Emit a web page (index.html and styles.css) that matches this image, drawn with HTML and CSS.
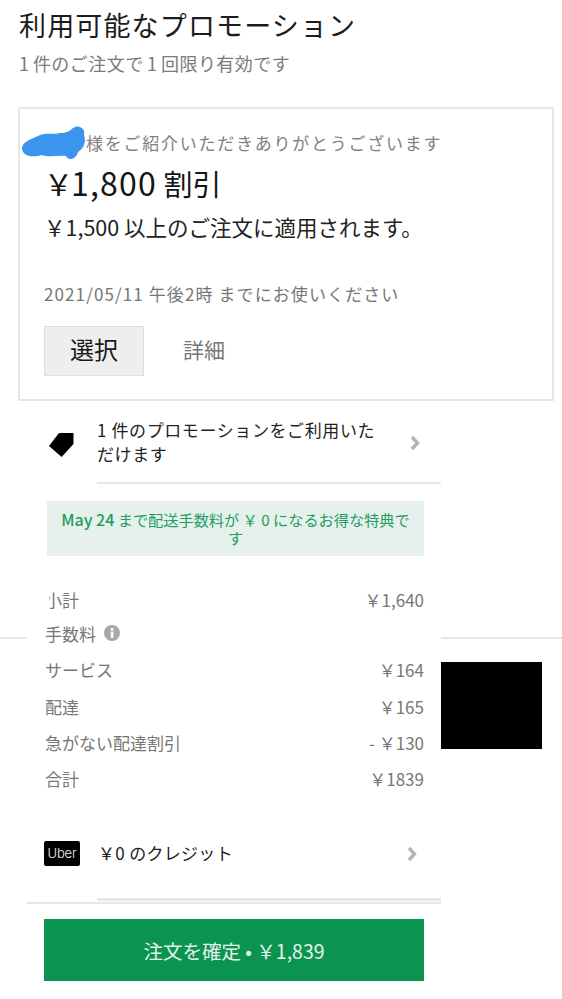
FILE: index.html
```html
<!DOCTYPE html>
<html lang="ja">
<head>
<meta charset="utf-8">
<title>利用可能なプロモーション</title>
<link rel="stylesheet" href="styles.css">
</head>
<body>
<div class="page">
  <h1 class="title">利用可能なプロモーション</h1>
  <p class="subtitle">1 件のご注文で 1 回限り有効です</p>

  <section class="card">
    <svg class="blob" viewBox="0 0 70 40" aria-hidden="true"><path d="M2 24C3 17 12 15 18 12 25 8 33 11 40 9 46 9 50 7 53 4 58 0 66 4 64 11 66 16 65 24 58 28 56 36 48 37 46 32 38 31 30 34 22 31 12 34 2 32 2 24Z" fill="#3b95ef"/></svg>
    <p class="greeting">様をご紹介いただきありがとうございます</p>
    <p class="amount">&#xFFE5;<span class="figure">1,800</span> 割引</p>
    <p class="minimum">&#xFFE5;1,500 以上のご注文に適用されます。</p>
    <p class="expiry">2021/05/11 午後2時 までにお使いください</p>
    <div class="actions">
      <button class="select">選択</button>
      <span class="details">詳細</span>
    </div>
  </section>

  <div class="rule"></div>
  <div class="blackout"></div>

  <section class="panel">
    <div class="promo">
      <svg class="tag" viewBox="0 0 25 24" aria-hidden="true"><path d="M0 13 10 0H24.500V11L12.600 24Z" fill="#000"/></svg>
      <p class="promo-text">1 件のプロモーションをご利用いただけます</p>
      <svg class="chev" viewBox="0 0 10 16" aria-hidden="true"><path d="M2 2 7.500 8 2 14" fill="none" stroke="#b4b4b4" stroke-width="3.400"/></svg>
    </div>
    <div class="divider"></div>
    <div class="notice"><b>May 24</b> まで配送手数料が &#xFFE5; 0 になるお得な特典です</div>

    <ul class="lines">
      <li class="line"><span class="clipped">小計</span><span>&#xFFE5;1,640</span></li>
      <li class="line line-fee"><span class="fee">手数料
        <svg class="info" viewBox="0 0 16 16" aria-hidden="true"><circle cx="8" cy="8" r="8" fill="#a8a8a8"/><rect x="6.800" y="3" width="2.600" height="2.600" fill="#fff"/><rect x="6.800" y="6.600" width="2.600" height="6.400" fill="#fff"/></svg></span></li>
      <li class="line"><span>サービス</span><span>&#xFFE5;164</span></li>
      <li class="line line-delivery"><span>配達</span><span>&#xFFE5;165</span></li>
      <li class="line"><span>急がない配達割引</span><span>- &#xFFE5;130</span></li>
      <li class="line"><span>合計</span><span>&#xFFE5;1839</span></li>
    </ul>

    <div class="credit">
      <span class="uber">Uber</span>
      <span class="credit-text">&#xFFE5;0 のクレジット</span>
      <svg class="chev" viewBox="0 0 10 16" aria-hidden="true"><path d="M2 2 7.500 8 2 14" fill="none" stroke="#b4b4b4" stroke-width="3.400"/></svg>
    </div>
    <div class="divider divider-thick"></div>
    <div class="divider-full"></div>
    <button class="confirm">注文を確定 • &#xFFE5;1,839</button>
  </section>
</div>
</body>
</html>
```

FILE: styles.css
```css
* { box-sizing: border-box; }
html, body { margin: 0; padding: 0; background: #fff; }
body { font-family: "Noto Sans CJK JP", "Noto Sans", sans-serif; }
p, h1, ul { margin: 0; padding: 0; }
ul { list-style: none; }
.page { position: relative; width: 562px; height: 999px; overflow: hidden; padding-top: 7px; }

.title { margin-left: 19px; font-size: 27px; line-height: 36px; font-weight: 400; letter-spacing: 1.150px; color: #1c1c1c; }
.subtitle { margin: 8px 0 0 19px; font-size: 18px; line-height: 24px; letter-spacing: .45px; word-spacing: -1px; color: #7b7b7b; }

.card { position: relative; width: 536px; height: 294px; margin: 32px 0 0 18px; padding: 22px 0 0 24px; border: 2px solid #e6e6e6; }
.blob { position: absolute; left: 0; top: 15px; width: 70px; height: 40px; }
.greeting { margin-left: 42px; font-size: 17px; line-height: 24px; letter-spacing: 1.750px; color: #808080; }
.amount { margin: 9px 0 0 0; font-size: 29px; line-height: 36px; color: #151515; }
.figure { margin-left: -2px; font-size: 32px; letter-spacing: 1.200px; }
.minimum { margin: 12px 0 0 0; font-size: 21.500px; line-height: 28px; color: #222; }
.expiry { margin-top: 41px; font-size: 17px; line-height: 24px; letter-spacing: 1.100px; color: #767676; }
.actions { display: flex; align-items: center; gap: 39px; margin-top: 20px; }
.select { width: 100px; height: 50px; padding: 0 0 5px; background: #eee; border: 1px solid #dedede; font: inherit; font-size: 24px; color: #1a1a1a; }
.details { font-size: 21px; line-height: 46px; color: #777; margin-bottom: 4px; }

.rule { position: absolute; left: 0; right: 0; top: 637px; height: 2px; background: #e8e8e8; }
.blackout { position: absolute; left: 441px; top: 662px; width: 101px; height: 87px; background: #000; }

.panel { position: relative; width: 414px; margin-left: 27px; background: #fff; }
.promo { display: flex; align-items: center; height: 81px; padding: 0 0 0 22px; }
.tag { width: 25px; height: 24px; flex: none; margin-top: 6px; }
.promo-text { width: 287px; margin-left: 23px; font-size: 17px; line-height: 24px; letter-spacing: .6px; color: #222; }
.promo .chev { margin-top: 2px; }
.chev { width: 10px; height: 16px; flex: none; margin-left: 26px; }
.divider { height: 2px; margin-left: 70px; background: #e8e8e8; }
.notice { width: 377px; height: 55px; margin: 17px 0 0 20px; padding: 9px 11px 0; background: #e6f0ec; color: #1f9d60; font-size: 15.200px; line-height: 18px; text-align: center; }
.notice b { font-size: 16px; font-weight: 500; }

.lines { margin: 25px 17px 0 18px; }
.line { display: flex; justify-content: space-between; align-items: center; height: 36px; font-size: 17px; color: #777; }
.line-fee { margin-top: -2px; }
.line-delivery { margin-top: 1px; }
.clipped { position: relative; }
.clipped::before { content: ""; position: absolute; left: 0; top: 0; width: 4px; height: 100%; background: #fff; }
.fee { display: flex; align-items: center; gap: 8px; }
.info { width: 16px; height: 16px; }

.credit { display: flex; align-items: center; height: 25px; margin-top: 45px; padding-left: 17px; }
.uber { width: 36px; height: 25px; flex: none; border-radius: 2px; background: #000; color: #f4f4f4; font-family: Inter, sans-serif; font-weight: 300; font-size: 13px; letter-spacing: -.2px; line-height: 25px; text-align: center; }
.credit-text { width: 309px; margin-left: 18px; margin-bottom: 3px; font-size: 17px; letter-spacing: .3px; color: #222; }
.credit .chev { margin-left: 0; }
.divider-thick { height: 3px; margin-top: 32px; }
.divider-full { height: 2px; margin-top: 1px; background: #e6e6e6; }
.confirm { display: block; width: 380px; height: 62px; margin: 15px 0 0 17px; padding: 0; border: 0; background: #0b9450; color: #e3f2ea; font: inherit; font-size: 19.500px; }
```
